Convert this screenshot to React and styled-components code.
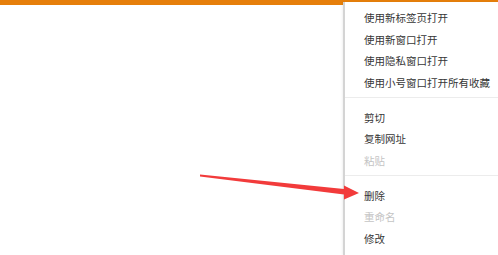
import { Fragment } from "react";
import styled, { createGlobalStyle } from "styled-components";

const GlobalStyle = createGlobalStyle`
  html, body {
    margin: 0;
    padding: 0;
    background: #ffffff;
  }
  body {
    font-family: "Noto Sans CJK SC", "Noto Sans", sans-serif;
  }
`;

const Page = styled.div`
  position: relative;
  width: 498px;
  height: 255px;
  overflow: hidden;
  background: #fff;
`;

const TopBar = styled.div`
  height: 5px;
  background: #e67f0b;
`;

const Menu = styled.ul`
  position: absolute;
  top: 2px;
  right: 0;
  bottom: 0;
  width: 153px;
  margin: 0;
  padding: 5px 0 0;
  list-style: none;
  background: #fff;
  border-left: 2px solid #d4d4d4;
  box-shadow: -1px 0 2px rgba(0, 0, 0, 0.06);
`;

const Item = styled.li`
  height: 21.5px;
  line-height: 21.5px;
  padding-left: 19px;
  font-size: 10.5px;
  white-space: nowrap;
  color: ${({ $disabled }) => ($disabled ? "#c4c4c4" : "#363636")};
`;

const Divider = styled.li`
  height: 1px;
  margin: 4px 0 8.5px;
  background: #ececec;
`;

const Arrow = styled.svg`
  position: absolute;
  left: 0;
  top: 0;
  pointer-events: none;
`;

const groups = [
  [
    { label: "使用新标签页打开" },
    { label: "使用新窗口打开" },
    { label: "使用隐私窗口打开" },
    { label: "使用小号窗口打开所有收藏" },
  ],
  [{ label: "剪切" }, { label: "复制网址" }, { label: "粘贴", disabled: true }],
  [{ label: "删除" }, { label: "重命名", disabled: true }, { label: "修改" }],
];

export default function App() {
  return (
    <Page>
      <GlobalStyle />
      <TopBar />
      <Menu>
        {groups.map((group, gi) => (
          <Fragment key={gi}>
            {gi > 0 && <Divider />}
            {group.map((it) => (
              <Item key={it.label} $disabled={it.disabled}>
                {it.label}
              </Item>
            ))}
          </Fragment>
        ))}
      </Menu>
      <Arrow width="498" height="255" viewBox="0 0 498 255">
        <polygon
          points="200,174.5 344,189 344,185.5 359,193 344,199.5 344,194.5 200,176.5"
          fill="#f23b3b"
        />
      </Arrow>
    </Page>
  );
}
